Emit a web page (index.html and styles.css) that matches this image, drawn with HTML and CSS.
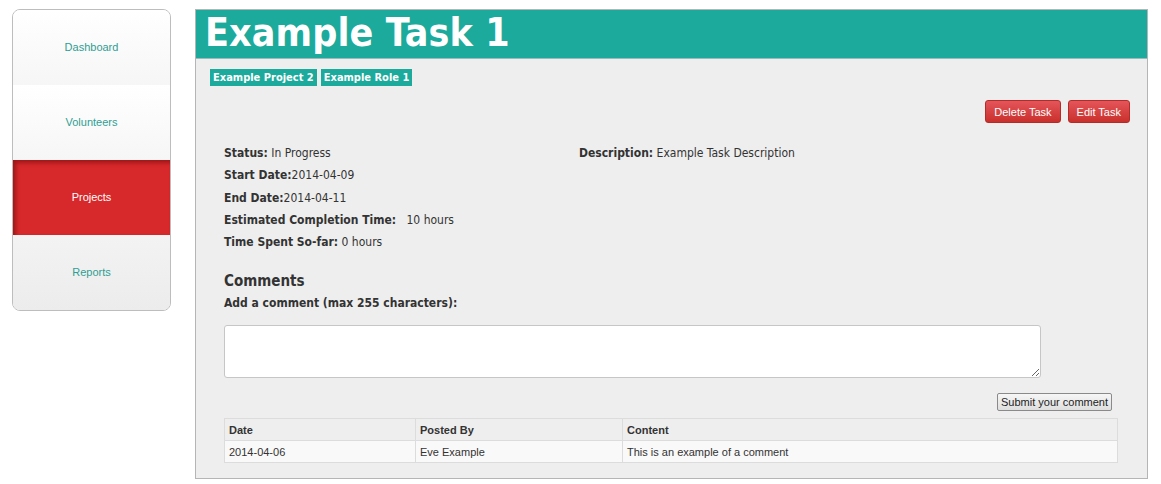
FILE: index.html
```html
<!DOCTYPE html>
<html>
<head>
<meta charset="utf-8">
<link rel="stylesheet" href="styles.css">
</head>
<body>
<div class="page">
  <nav class="sidebar">
    <a class="nav-item">Dashboard</a>
    <a class="nav-item">Volunteers</a>
    <a class="nav-item active">Projects</a>
    <a class="nav-item">Reports</a>
  </nav>
  <main class="main">
    <h1 class="title">Example Task 1</h1>
    <div class="content">
      <div class="tags">
        <span class="tag">Example Project 2</span>
        <span class="tag">Example Role 1</span>
      </div>
      <div class="actions">
        <button class="btn-red">Delete Task</button>
        <button class="btn-red">Edit Task</button>
      </div>
      <div class="details">
        <div class="col-left">
          <div class="row"><b>Status:</b> In Progress</div>
          <div class="row"><b>Start Date:</b>2014-04-09</div>
          <div class="row"><b>End Date:</b>2014-04-11</div>
          <div class="row"><b>Estimated Completion Time:</b>&nbsp;&nbsp; 10 hours</div>
          <div class="row"><b>Time Spent So-far:</b> 0 hours</div>
        </div>
        <div class="col-right">
          <div class="row"><b>Description:</b> Example Task Description</div>
        </div>
      </div>
      <h2 class="comments-title">Comments</h2>
      <div class="comment-label">Add a comment (max 255 characters):</div>
      <textarea class="comment-box"></textarea>
      <div class="submit-row"><button class="btn-submit">Submit your comment</button></div>
      <table class="comments">
        <thead>
          <tr><th class="c1">Date</th><th class="c2">Posted By</th><th>Content</th></tr>
        </thead>
        <tbody>
          <tr><td>2014-04-06</td><td>Eve Example</td><td>This is an example of a comment</td></tr>
        </tbody>
      </table>
    </div>
  </main>
</div>
</body>
</html>
```
FILE: styles.css
```css
html, body {
  margin: 0;
  padding: 0;
  background: #ffffff;
}
.page {
  display: flex;
  align-items: flex-start;
  padding: 9px 13px 0 12px;
}
.sidebar {
  width: 157px;
  border: 1px solid #bdbdbd;
  border-radius: 8px;
  overflow: hidden;
  display: flex;
  flex-direction: column;
  flex: none;
  background: #fff;
}
.nav-item {
  height: 75px;
  display: flex;
  align-items: center;
  justify-content: center;
  padding-bottom: 2px;
  box-sizing: border-box;
  font-family: "Liberation Sans", Arial, sans-serif;
  font-size: 11px;
  color: #2f9e93;
  background: linear-gradient(to bottom, #ffffff, #f6f6f6);
}
.nav-item:nth-child(4) {
  background: linear-gradient(to bottom, #f3f3f3, #ececec);
}
.nav-item.active {
  background: #d7292b;
  color: #ffffff;
  box-shadow: inset 3px 3px 4px rgba(90, 0, 0, 0.45);
}
.main {
  margin-left: 24px;
  flex: 1;
  border: 1px solid #b5b5b5;
  background: #eeeeee;
  height: 470px;
  box-sizing: border-box;
}
.title {
  margin: 0;
  height: 48px;
  background: #1baa9b;
  color: #ffffff;
  font-family: "DejaVu Sans Condensed", "DejaVu Sans", sans-serif;
  font-weight: bold;
  font-size: 39px;
  line-height: 46px;
  padding-left: 9px;
  border-bottom: 1px solid #9bb;
  letter-spacing: 0.1px;
}
.content {
  padding: 0 16px 0 14px;
}
.tags {
  display: flex;
  gap: 4px;
  margin-top: 10px;
}
.tag {
  background: #1baa9b;
  color: #ffffff;
  font-family: "DejaVu Sans Condensed", "DejaVu Sans", sans-serif;
  font-weight: bold;
  font-size: 11px;
  line-height: 17px;
  padding: 0 3px;
}
.actions {
  display: flex;
  justify-content: flex-end;
  gap: 7px;
  margin-top: 14px;
  padding-right: 1px;
}
.btn-red {
  font-family: "Liberation Sans", Arial, sans-serif;
  font-size: 11px;
  color: #ffffff;
  background: linear-gradient(to bottom, #e4555a, #c9302c);
  border: 1px solid #b52b27;
  border-radius: 3px;
  height: 23px;
  padding: 0 8px;
}
.details {
  display: flex;
  margin-top: 19px;
  padding-left: 14px;
  font-family: "DejaVu Sans Condensed", "DejaVu Sans", sans-serif;
  font-size: 12px;
  color: #333;
}
.col-left {
  width: 355px;
}
.row {
  line-height: 22.3px;
}
.row b {
  color: #333;
}
.comments-title {
  margin: 18px 0 0 14px;
  font-family: "DejaVu Sans Condensed", "DejaVu Sans", sans-serif;
  font-weight: bold;
  font-size: 15px;
  color: #333;
  line-height: 20px;
}
.comment-label {
  margin: 4px 0 0 14px;
  font-family: "DejaVu Sans Condensed", "DejaVu Sans", sans-serif;
  font-weight: bold;
  font-size: 12px;
  color: #333;
  line-height: 16px;
}
.comment-box {
  display: block;
  margin: 14px 0 0 14px;
  width: 817px;
  height: 53px;
  box-sizing: border-box;
  border: 1px solid #c6c6c6;
  border-radius: 3px;
  background: #fff;
}
.submit-row {
  display: flex;
  justify-content: flex-end;
  margin-top: 15px;
  padding-right: 19px;
}
.btn-submit {
  font-family: "Liberation Sans", Arial, sans-serif;
  font-size: 11px;
  color: #222;
  background: linear-gradient(to bottom, #f6f6f6, #dedede);
  border: 1px solid #8a8a8a;
  border-radius: 2px;
  height: 18px;
  padding: 0 3px;
}
.comments {
  margin: 7px 0 0 14px;
  width: 894px;
  border-collapse: collapse;
  font-family: "Liberation Sans", Arial, sans-serif;
  font-size: 11px;
  color: #333;
}
.comments th, .comments td {
  border: 1px solid #dcdcdc;
  text-align: left;
  padding: 0 4px;
}
.comments th {
  height: 21px;
  background: #eeeeee;
  font-weight: bold;
}
.comments td {
  height: 21px;
  background: #f9f9f9;
}
.c1 { width: 182px; }
.c2 { width: 198px; }
```
